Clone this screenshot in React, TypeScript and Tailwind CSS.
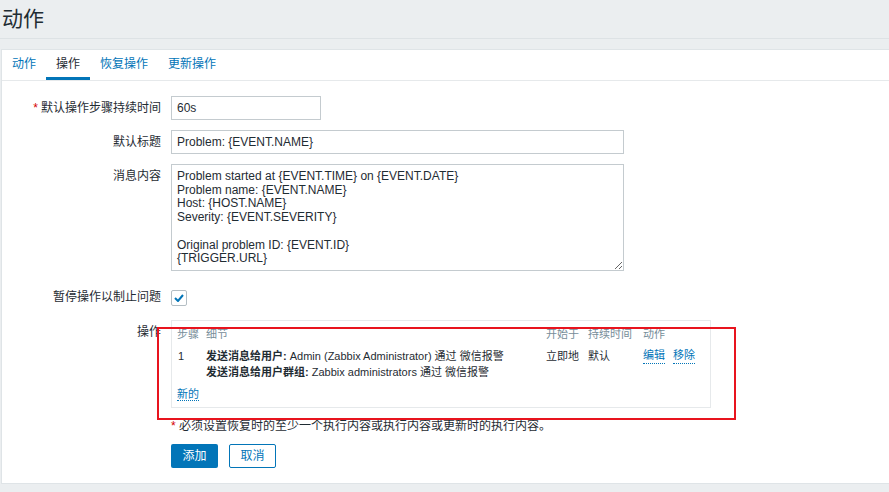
import React from "react";

const font = { fontFamily: '"Liberation Sans", Arial, "Noto Sans CJK SC", sans-serif' };

const tabs = ["动作", "操作", "恢复操作", "更新操作"];

function Row({ label, required, children, className = "" }: { label: string; required?: boolean; children: React.ReactNode; className?: string }) {
  return (
    <div className={`flex ${className}`}>
      <div className="w-[159px] shrink-0 pr-0 text-right flex items-start justify-end pt-[5px]">
        {required && <span className="text-[#d40000] mr-[3px]">*</span>}
        <span>{label}</span>
      </div>
      <div className="ml-[10px]">{children}</div>
    </div>
  );
}

export default function App() {
  return (
    <div className="relative h-[492px] w-[889px] overflow-hidden bg-[#ebeef0] text-[12px] leading-[14px] text-[#1f2c33]" style={font}>
      {/* Page title */}
      <header className="h-[39px] border-b border-[#dde2e5] pl-[2px] pt-[6px] text-[21px] leading-[26px]">动作</header>

      {/* Panel */}
      <div className="mt-[10px] ml-[1px] h-[435px] border border-r-0 border-[#dfe4e7] bg-white">
        <nav className="flex h-[31px] border-b border-[#e6e9eb]">
          {tabs.map((t, i) => (
            <div
              key={t}
              className={`flex items-center px-[10px] pt-[1px] ${
                i === 1 ? "border-b-[3px] border-[#0275b8] text-[#1f2c33]" : "border-b-[3px] border-transparent text-[#0275b8]"
              }`}
            >
              {t}
            </div>
          ))}
        </nav>

        <div className="pt-[15px]">
          <Row label="默认操作步骤持续时间" required>
            <input readOnly value="60s" className="h-[24px] w-[150px] border border-[#c4cbcf] px-[5px] outline-none" style={font} />
          </Row>
          <Row label="默认标题" className="mt-[10px]">
            <input readOnly value="Problem: {EVENT.NAME}" className="h-[24px] w-[453px] border border-[#c4cbcf] px-[5px] outline-none" style={font} />
          </Row>
          <Row label="消息内容" className="mt-[10px]">
            <textarea
              readOnly
              value={"Problem started at {EVENT.TIME} on {EVENT.DATE}\nProblem name: {EVENT.NAME}\nHost: {HOST.NAME}\nSeverity: {EVENT.SEVERITY}\n\nOriginal problem ID: {EVENT.ID}\n{TRIGGER.URL}"}
              className="block h-[107px] w-[453px] border border-[#c4cbcf] px-[5px] pt-[5px] text-[12px] leading-[13.7px] outline-none"
              style={font}
            />
          </Row>
          <Row label="暂停操作以制止问题" className="mt-[14px]">
            <div className="mt-[5px] flex h-[16px] w-[16px] items-center justify-center rounded-[2px] border border-[#b4bec4]">
              <svg width="10" height="8" viewBox="0 0 10 8">
                <path d="M1 4 L4 7 L9 1" fill="none" stroke="#0275b8" strokeWidth="2" />
              </svg>
            </div>
          </Row>
          <Row label="操作" className="mt-[14px]">
            <div className="h-[88px] w-[540px] border border-[#e6e9eb] px-[5px] pt-[6px] text-[11px]">
              <div className="flex text-[#768d99]">
                <div className="w-[29px]">步骤</div>
                <div className="w-[340px]">细节</div>
                <div className="w-[42px]">开始于</div>
                <div className="w-[55px]">持续时间</div>
                <div>动作</div>
              </div>
              <div className="mt-[7px] flex leading-[16px]">
                <div className="w-[29px] pl-[1px]">1</div>
                <div className="w-[340px]">
                  <div>
                    <b>发送消息给用户:</b> Admin (Zabbix Administrator) 通过 微信报警
                  </div>
                  <div>
                    <b>发送消息给用户群组:</b> Zabbix administrators 通过 微信报警
                  </div>
                </div>
                <div className="w-[42px]">立即地</div>
                <div className="w-[55px]">默认</div>
                <div className="flex gap-[8px]">
                  <span className="h-[16px] border-b border-dotted border-[#0275b8] leading-[15px] text-[#0275b8]">编辑</span>
                  <span className="h-[16px] border-b border-dotted border-[#0275b8] leading-[15px] text-[#0275b8]">移除</span>
                </div>
              </div>
              <div className="mt-[7px]">
                <span className="border-b border-dotted border-[#0275b8] text-[#0275b8]">新的</span>
              </div>
            </div>
          </Row>

          <div className="ml-[169px] mt-[11px]">
            <span className="text-[#d40000]">*</span> 必须设置恢复时的至少一个执行内容或执行内容或更新时的执行内容。
          </div>

          <div className="ml-[169px] mt-[11px] flex gap-[11px]">
            <button className="h-[24px] w-[47px] rounded-[2px] bg-[#0275b8] text-white" style={font}>添加</button>
            <button className="h-[24px] w-[47px] rounded-[2px] border border-[#0275b8] bg-white text-[#0275b8]" style={font}>取消</button>
          </div>
        </div>
      </div>

      {/* Red annotation box */}
      <div className="absolute left-[157px] top-[327px] h-[93px] w-[579px] border-2 border-[#e8141e]" />
    </div>
  );
}
